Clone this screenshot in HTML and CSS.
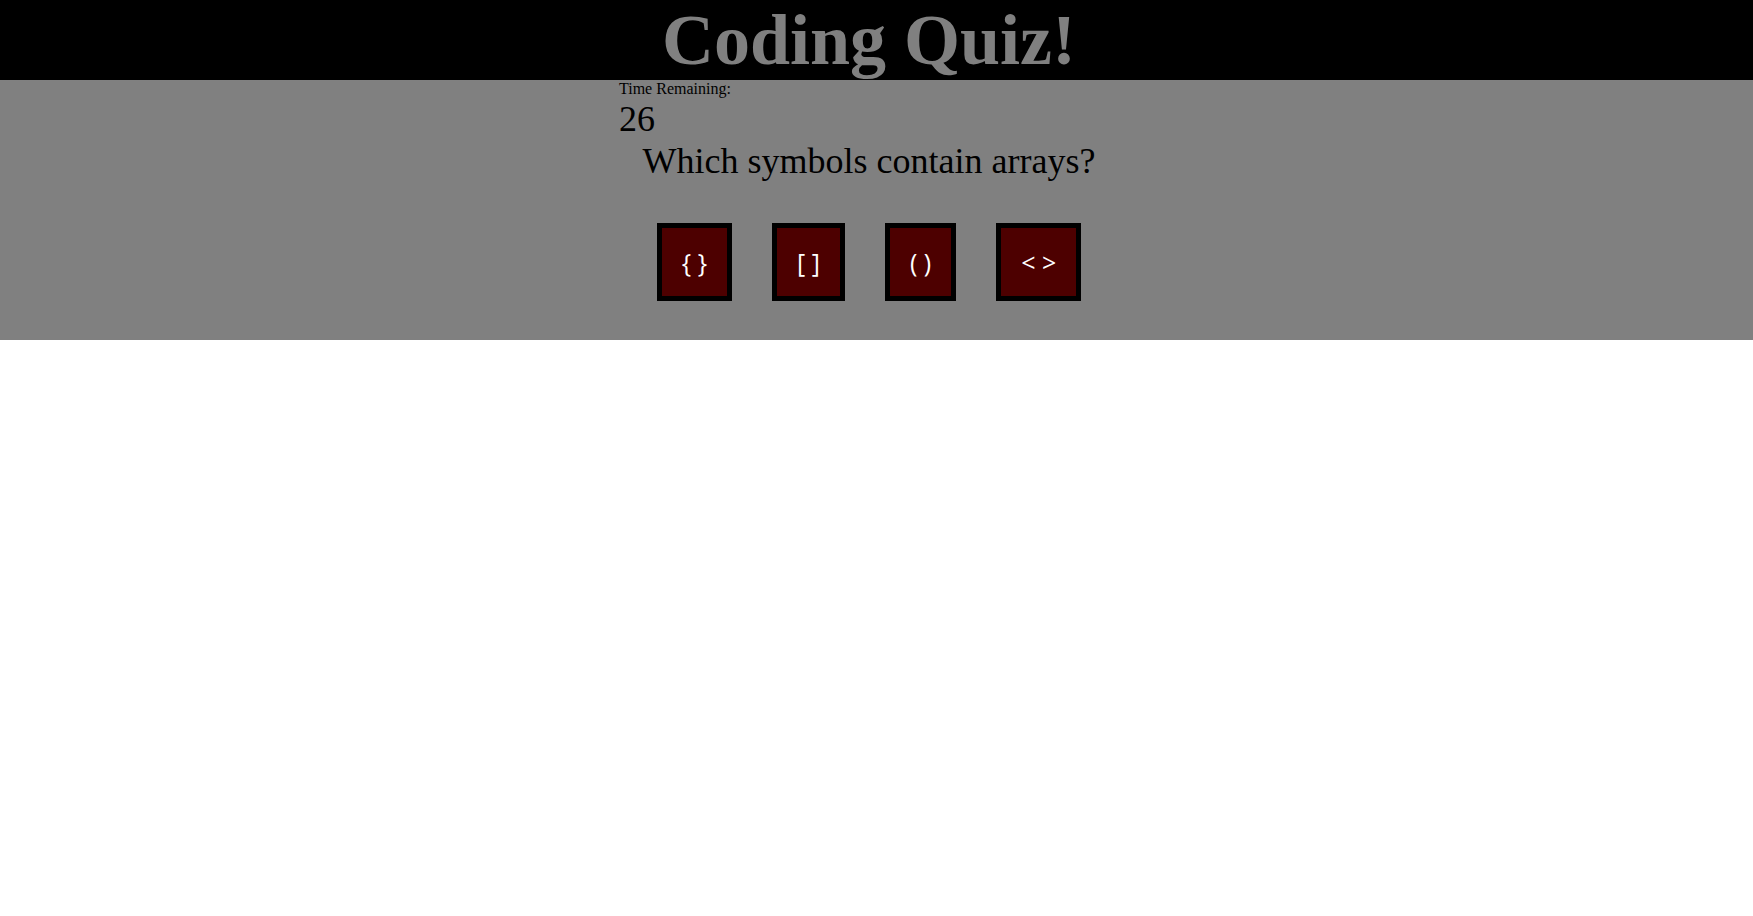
FILE: index.html
```html
<!DOCTYPE html>
<html lang="en">
<head>
<meta charset="utf-8">
<title>Coding Quiz</title>
<link rel="stylesheet" href="styles.css">
</head>
<body>
<header class="site-header">
  <h1 class="title">Coding Quiz!</h1>
</header>
<main class="stage">
  <section class="quiz">
    <div class="timer-label">Time Remaining:</div>
    <div class="timer">26</div>
    <p class="question">Which symbols contain arrays?</p>
    <div class="choices">
      <button class="choice">{ }</button>
      <button class="choice">[ ]</button>
      <button class="choice">( )</button>
      <button class="choice">&lt; &gt;</button>
    </div>
  </section>
</main>
</body>
</html>
```
FILE: styles.css
```css
html, body {
  margin: 0;
  padding: 0;
  background: #ffffff;
  font-family: "Liberation Serif", "Times New Roman", serif;
  color: #000;
}

.site-header {
  background: #000000;
  padding-right: 15px;
}

.title {
  margin: 0;
  font-size: 72px;
  line-height: 80px;
  font-weight: bold;
  color: #808080;
  text-align: center;
}

.stage {
  background: #808080;
  padding-right: 15px;
  height: 260px;
}

.quiz {
  width: 500px;
  margin: 0 auto;
}

.timer-label {
  font-size: 16px;
}

.timer {
  font-size: 36px;
}

.question {
  margin: 0;
  font-size: 36px;
  text-align: center;
}

.choices {
  display: flex;
  justify-content: center;
  gap: 40px;
  margin-top: 41px;
}

.choice {
  background: #4d0000;
  color: #ffffff;
  border: 5px solid #000000;
  font-family: "Open Sans", "DejaVu Sans", sans-serif;
  font-size: 25px;
  padding: 19px 20px;
  line-height: 30px;
  margin: 0;
}
```
